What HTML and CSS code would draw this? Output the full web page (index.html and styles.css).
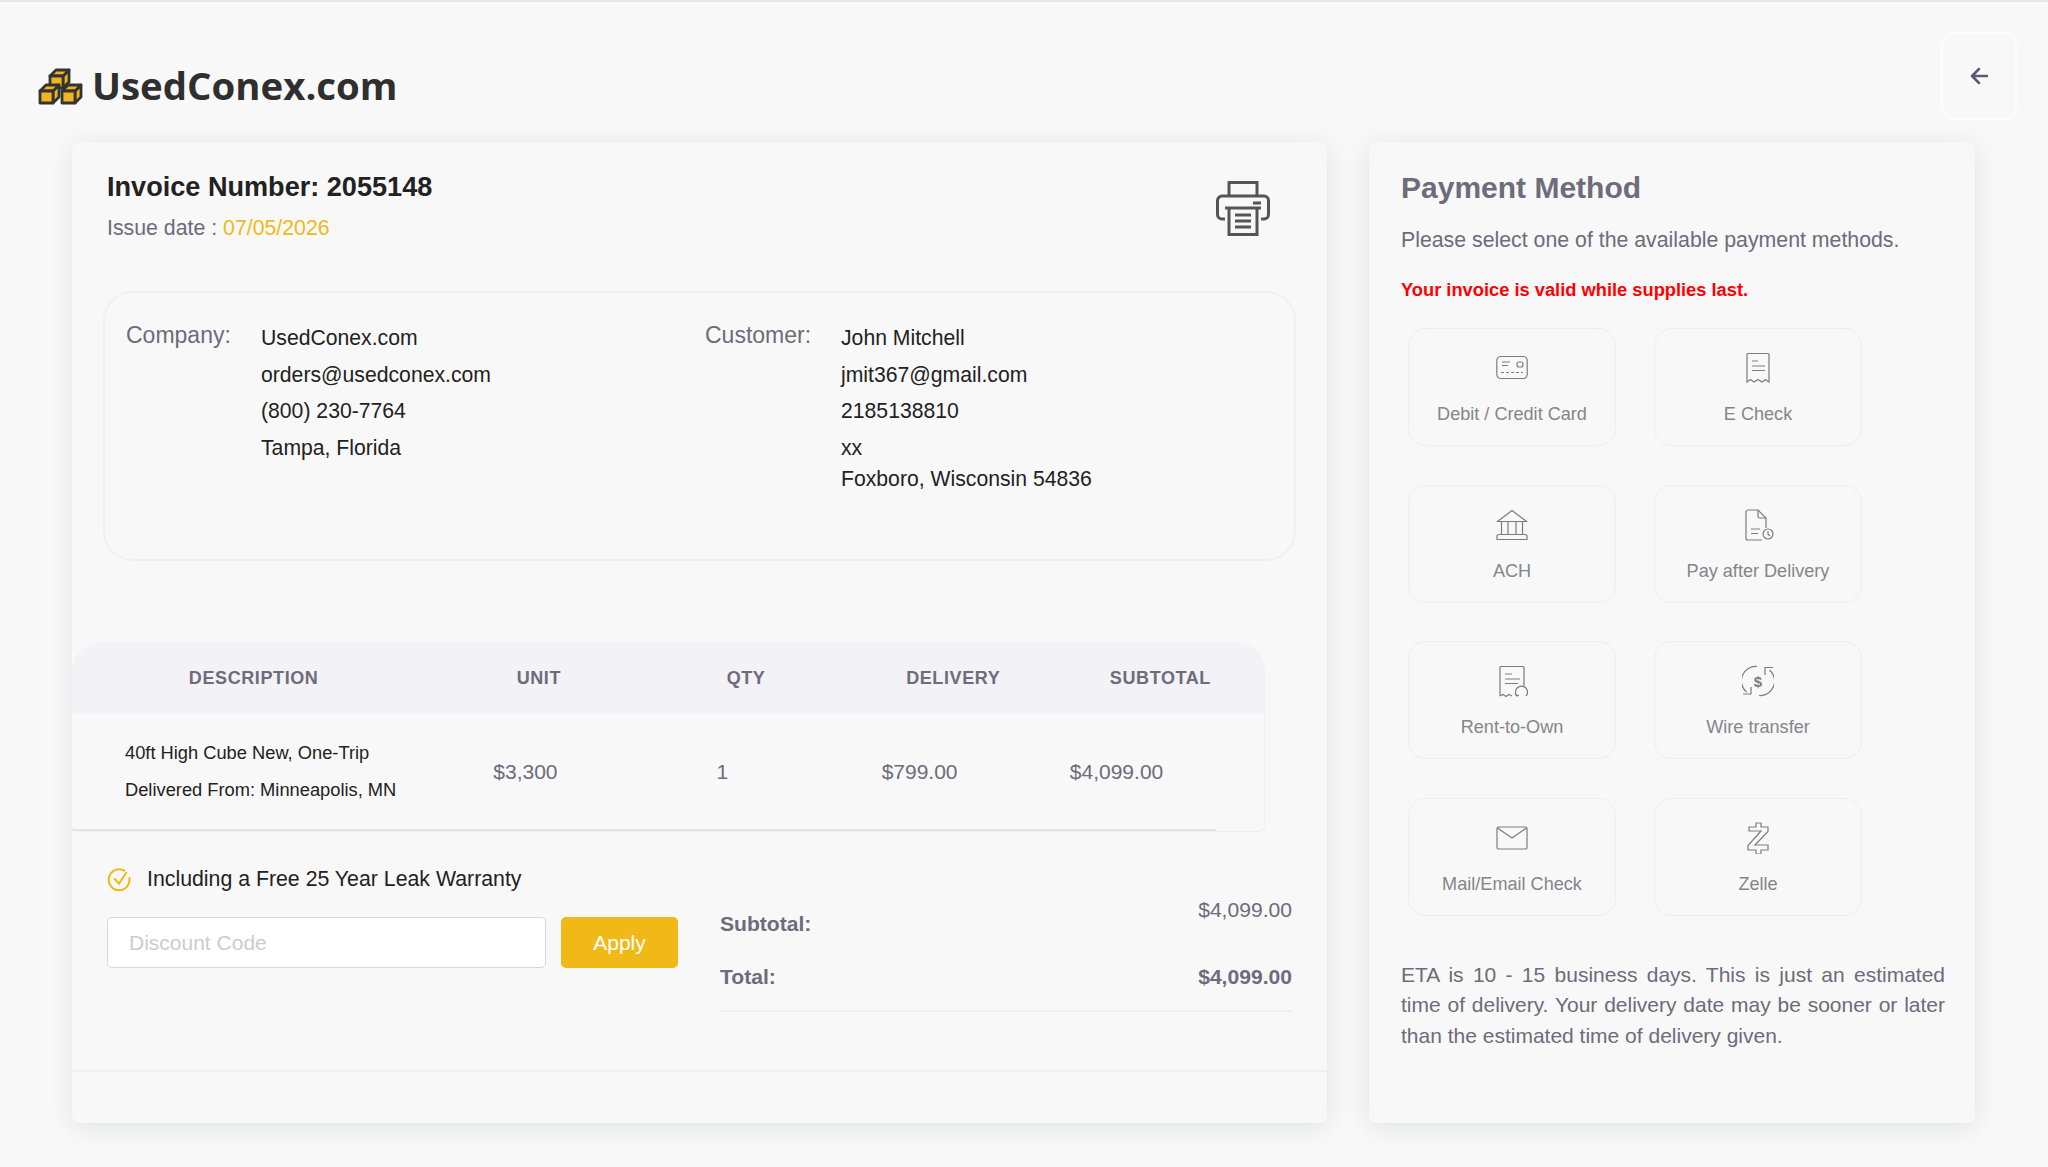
FILE: index.html
```html
<!DOCTYPE html>
<html lang="en">
<head>
	<meta charset="UTF-8">
	<meta name="viewport" content="width=device-width, initial-scale=1.0">
	<title>Invoice 2055148</title>
	<link rel="stylesheet" href="styles.css">
</head>
<body>
	<header class="topbar">
		<div class="logo">
			<svg class="logo__icon" viewBox="0 0 46 38">
				<defs>
					<g id="cube">
						<path class="cube__side" d="M13 0l6-6v12l-6 6z"/>
						<path class="cube__top" d="M0 0l6-6h13l-6 6z"/>
						<rect class="cube__front" width="13" height="12"/>
					</g>
				</defs>
				<use href="#cube" x="12" y="9"/>
				<use href="#cube" x="2" y="24"/>
				<use href="#cube" x="24" y="24"/>
			</svg>
			<span class="logo__text">UsedConex.com</span>
		</div>
		<button class="btn-back">
			<svg viewBox="0 0 24 24" class="btn-back__icon"><path d="M20 12H5M12 19l-7-7 7-7"/></svg>
		</button>
	</header>

	<main class="container">
		<section class="card invoice">
			<div class="invoice__head">
				<div>
					<h1 class="invoice__number">Invoice Number: 2055148</h1>
					<p class="invoice__date">Issue date : <span class="accent">07/05/2026</span></p>
				</div>
				<svg class="invoice__print" viewBox="0 0 54 55">
					<path d="M13 15V1.500h28V15"/>
					<path d="M9 38H6a4.500 4.500 0 0 1-4.500-4.500V19.500A4.500 4.500 0 0 1 6 15h42a4.500 4.500 0 0 1 4.500 4.500v14A4.500 4.500 0 0 1 48 38h-3"/>
					<path d="M37 22h8M9 27h36M13 27v26.500h28V27M19 34h16M19 40h16M19 46h16"/>
				</svg>
			</div>

			<div class="parties">
				<div class="party party--company">
					<span class="party__label">Company:</span>
					<div class="party__info">
						<p>UsedConex.com</p>
						<p>orders@usedconex.com</p>
						<p>(800) 230-7764</p>
						<p>Tampa, Florida</p>
					</div>
				</div>
				<div class="party party--customer">
					<span class="party__label">Customer:</span>
					<div class="party__info">
						<p>John Mitchell</p>
						<p>jmit367@gmail.com</p>
						<p>2185138810</p>
						<p>xx</p>
						<p class="party__tight">Foxboro, Wisconsin 54836</p>
					</div>
				</div>
			</div>

			<div class="items">
				<table class="items__table">
					<thead>
						<tr>
							<th class="col-desc">Description</th>
							<th>Unit</th>
							<th>Qty</th>
							<th>Delivery</th>
							<th>Subtotal</th>
						</tr>
					</thead>
					<tbody>
						<tr>
							<td class="items__desc">
								<p>40ft High Cube New, One-Trip</p>
								<p>Delivered From: Minneapolis, MN</p>
							</td>
							<td class="cell-unit">$3,300</td>
							<td class="cell-qty">1</td>
							<td class="cell-delivery">$799.00</td>
							<td class="cell-subtotal">$4,099.00</td>
						</tr>
					</tbody>
				</table>
				<div class="items__line"></div>
			</div>

			<div class="summary">
				<div class="summary__left">
					<div class="warranty">
						<svg class="warranty__icon" viewBox="0 0 24 24">
							<path d="M21.500 10.500a10 10 0 1 1-5-7"/>
							<path d="M7.500 11.500l4 4.500 7-10.500"/>
						</svg>
						<span>Including a Free 25 Year Leak Warranty</span>
					</div>
					<div class="discount">
						<input class="discount__input" type="text" placeholder="Discount Code">
						<button class="discount__btn">Apply</button>
					</div>
				</div>
				<div class="totals">
					<div class="totals__row totals__row--sub">
						<b>Subtotal:</b>
						<span>$4,099.00</span>
					</div>
					<div class="totals__row">
						<b>Total:</b>
						<b>$4,099.00</b>
					</div>
				</div>
			</div>
			<div class="invoice__footer"></div>
		</section>

		<aside class="card payment">
			<h2 class="payment__title">Payment Method</h2>
			<p class="payment__text">Please select one of the available payment methods.</p>
			<p class="payment__warn">Your invoice is valid while supplies last.</p>

			<div class="methods">
				<div class="method">
					<svg class="method__icon" viewBox="0 0 32 32">
						<rect x="0.800" y="4.500" width="30.400" height="22" rx="4"/>
						<path d="M6 10h8M6 13.500h6M5 20.500h3M10 20.500h3M15 20.500h3M20 20.500h3M25 20.500h2"/>
						<rect x="21" y="10" width="6" height="5" rx="2"/>
					</svg>
					<span>Debit / Credit Card</span>
				</div>
				<div class="method">
					<svg class="method__icon" viewBox="0 0 32 32">
						<path d="M5 30V2.500a1 1 0 0 1 1-1h20a1 1 0 0 1 1 1V30l-3.500-2.500L20 30l-4-2.500-4 2.500-3.500-2.500z"/>
						<path d="M10 9h6M10 14h13M10 18.500h13"/>
					</svg>
					<span>E Check</span>
				</div>
				<div class="method">
					<svg class="method__icon" viewBox="0 0 32 32">
						<path d="M1.500 12.500L16 1.500l14.500 11z"/>
						<path d="M5.500 12.500v13M12 12.500v13M20 12.500v13M26.500 12.500v13M3.500 25.500h25M1 30.500v-2.500a2 2 0 0 1 2-2.500h26a2 2 0 0 1 2 2.500v2.500z"/>
					</svg>
					<span>ACH</span>
				</div>
				<div class="method">
					<svg class="method__icon" viewBox="0 0 32 32">
						<path d="M24 19V9l-8-8H6a2 2 0 0 0-2 2v26a2 2 0 0 0 2 2h14"/>
						<path d="M16 1v6.500a1.500 1.500 0 0 0 1.500 1.500H24M9 20h9M9 24.500h7"/>
						<circle cx="26" cy="25" r="5"/>
						<path d="M26 22v3.200l2 1.800"/>
					</svg>
					<span>Pay after Delivery</span>
				</div>
				<div class="method">
					<svg class="method__icon" viewBox="0 0 32 32">
						<path d="M4 31V2.500a1 1 0 0 1 1-1h22a1 1 0 0 1 1 1V21M4 31l3-1.500 3 2 3-2 3 1.500"/>
						<path d="M9 9h7M9 14h15M9 18.500h13"/>
						<path d="M21 31a6 6 0 1 1 9 0M19 29l2 2 2-1"/>
					</svg>
					<span>Rent-to-Own</span>
				</div>
				<div class="method">
					<svg class="method__icon" viewBox="0 0 32 32">
						<path d="M15 1.500A14.500 14.500 0 0 0 4.500 27M17 30.500A14.500 14.500 0 0 0 27.500 5"/>
						<path d="M1 29h8v-7M31 2.500h-8V10"/>
						<text class="method__dollar" x="16" y="21.500" text-anchor="middle">$</text>
					</svg>
					<span>Wire transfer</span>
				</div>
				<div class="method">
					<svg class="method__icon" viewBox="0 0 32 32">
						<path d="M2.500 5h27a1.500 1.500 0 0 1 1.500 1.500v19a1.500 1.500 0 0 1-1.500 1.500h-27A1.500 1.500 0 0 1 1 25.500v-19A1.500 1.500 0 0 1 2.500 5z"/>
						<path d="M1.500 6L16 16 30.500 6"/>
					</svg>
					<span>Mail/Email Check</span>
				</div>
				<div class="method">
					<svg class="method__icon" viewBox="0 0 32 32">
						<path d="M14 1h5v4h7v4.500L13 23h13v5h-7v4h-5v-4H6v-4.500L19 9H7V5h7z"/>
					</svg>
					<span>Zelle</span>
				</div>
			</div>

			<p class="payment__eta">ETA is 10 - 15 business days. This is just an estimated time of delivery. Your delivery date may be sooner or later than the estimated time of delivery given.</p>
		</aside>
	</main>
</body>
</html>
```

FILE: styles.css
```css
*{
	margin: 0;
	padding: 0;
	box-sizing: border-box;
}
body{
	min-height: 100vh;
	background-color: #f8f8f8;
	border-top: 2px solid #e6e6e6;
	font-family: "Liberation Sans", Arial, sans-serif;
	color: #6e6b7b;
}
.accent{
	color: #f0b917;
}

/* top */
.topbar{
	display: flex;
	justify-content: space-between;
	align-items: flex-start;
	padding: 30px 30px 22px 38px;
}
.logo{
	display: flex;
	align-items: center;
	gap: 8px;
	margin-top: 31px;
}
.logo__icon{
	width: 46px;
	height: 38px;
	margin-top: 2px;
}
.cube__front, .cube__top, .cube__side{
	fill: #f0b41e;
	stroke: #333;
	stroke-width: 2.800;
	stroke-linejoin: round;
}
.logo__text{
	font-family: "Open Sans", sans-serif;
	font-weight: 700;
	font-size: 38.400px;
	line-height: 44px;
	color: #2f2f2f;
}
.btn-back{
	display: flex;
	align-items: center;
	justify-content: center;
	width: 76px;
	height: 88px;
	margin-right: 1px;
	background: #f8f8f8;
	border: 2px solid #fdfdfd;
	border-radius: 14px;
}
.btn-back__icon{
	width: 24px;
	height: 24px;
	fill: none;
	stroke: #5e5873;
	stroke-width: 2.500;
	stroke-linecap: round;
	stroke-linejoin: round;
}

/* layout */
.container{
	display: flex;
	gap: 42px;
	padding: 0 73px 0 72px;
}
.card{
	height: 981px;
	background-color: #f8f8f8;
	border-radius: 8px;
	box-shadow: 0 4px 24px rgba(34, 41, 47, .1);
}
.invoice{
	width: 1255px;
}
.payment{
	width: 606px;
	padding: 27px 30px 0 32px;
}

/* invoice head */
.invoice__head{
	display: flex;
	justify-content: space-between;
	align-items: flex-start;
	padding: 29px 57px 0 35px;
	height: 149px;
}
.invoice__number{
	font-size: 27.100px;
	line-height: 32px;
	color: #222;
}
.invoice__date{
	margin-top: 11px;
	font-size: 21.300px;
	line-height: 28px;
}
.invoice__print{
	width: 54px;
	height: 55px;
	margin-top: 10px;
	fill: none;
	stroke: #555;
	stroke-width: 3;
}

/* company & customer */
.parties{
	display: flex;
	width: 1193px;
	height: 270px;
	margin-left: 31px;
	padding: 27px 21px;
	border: 2px solid #f0f0f0;
	border-radius: 30px;
}
.party{
	display: flex;
	font-size: 21.200px;
	color: #222;
}
.party--company{
	width: 579px;
}
.party__label{
	width: 135px;
	font-size: 23px;
	line-height: 30px;
	color: #6e6b7b;
}
.party--customer .party__label{
	width: 136px;
}
.party__info p{
	line-height: 36.600px;
}
.party__info .party__tight{
	line-height: 26px;
}

/* table */
.items{
	width: 1193px;
	height: 190px;
	margin-top: 81px;
	border-right: 1px solid #efefef;
	border-bottom: 1px solid #efefef;
	border-radius: 30px 30px 6px 6px;
}
.items__table{
	width: 1192px;
	border-collapse: collapse;
	table-layout: fixed;
}
.items__table th{
	width: 207px;
	height: 71px;
	padding-top: 2px;
	background-color: #f3f2f7;
	font-size: 18px;
	letter-spacing: .6px;
	text-transform: uppercase;
}
.items__table th:first-child{
	border-top-left-radius: 30px;
}
.items__table th:last-child{
	border-top-right-radius: 30px;
}
.items__table .col-desc{
	width: 363px;
}
.items__table td{
	height: 116px;
	padding-top: 1px;
	font-size: 21px;
}
.items__table .items__desc{
	padding-left: 53px;
	font-size: 18.300px;
	color: #222;
}
.items__desc p{
	line-height: 36.600px;
}
.cell-unit{
	padding-left: 58px;
}
.cell-qty{
	padding-left: 74px;
}
.cell-delivery{
	padding-left: 32px;
}
.cell-subtotal{
	padding-left: 13px;
}
.items__line{
	width: 1144px;
	height: 2px;
	background-color: #e4e4e4;
}

/* summary */
.summary{
	display: flex;
	height: 238px;
	padding: 32px 35px 0 35px;
	justify-content: space-between;
}
.summary__left{
	width: 573px;
}
.warranty{
	display: flex;
	align-items: center;
	gap: 15px;
	font-size: 21.300px;
	line-height: 30px;
	color: #222;
}
.warranty__icon{
	width: 25px;
	height: 25px;
	fill: none;
	stroke: #f0b917;
	stroke-width: 2;
	stroke-linecap: round;
}
.discount{
	display: flex;
	gap: 15px;
	margin-top: 23px;
}
.discount__input{
	width: 439px;
	height: 51px;
	padding: 0 21px;
	background-color: #fff;
	border: 1px solid #d8d6de;
	border-radius: 5px;
	outline: none;
	font-family: inherit;
	font-size: 21px;
}
.discount__input::placeholder{
	color: #ccc;
}
.discount__btn{
	width: 117px;
	height: 51px;
	background-color: #f0b917;
	border: none;
	border-radius: 5px;
	font-family: inherit;
	font-size: 21px;
	color: #fff;
}
.totals{
	width: 572px;
	height: 148px;
	border-bottom: 2px solid #efefef;
	font-size: 21.100px;
}
.totals__row{
	display: flex;
	justify-content: space-between;
}
.totals__row--sub{
	height: 101px;
}
.totals__row--sub b{
	margin-top: 48px;
}
.totals__row--sub span{
	margin-top: 34px;
}
.invoice__footer{
	height: 2px;
	background-color: #f0eff5;
}

/* payment */
.payment__title{
	font-size: 30px;
	line-height: 38px;
}
.payment__text{
	margin-top: 19px;
	font-size: 21.300px;
	line-height: 28px;
}
.payment__warn{
	margin-top: 23px;
	font-size: 18.300px;
	font-weight: bold;
	line-height: 26px;
	color: #f00;
}
.methods{
	display: grid;
	grid-template-columns: repeat(2, 208px);
	grid-auto-rows: 118px;
	gap: 38.500px 38px;
	margin: 25px 0 0 7px;
}
.method{
	display: flex;
	flex-direction: column;
	align-items: center;
	padding-top: 23px;
	gap: 18px;
	border: 1px solid #eeeeee;
	border-radius: 18px;
	font-size: 18.100px;
	line-height: 24px;
	color: #82868b;
}
.method__icon{
	width: 32px;
	height: 32px;
	fill: none;
	stroke: #7c7c7c;
	stroke-width: 1.200;
	flex-shrink: 0;
}
.method__dollar{
	font-family: "Liberation Sans", sans-serif;
	font-size: 15px;
	font-weight: bold;
	fill: #7c7c7c;
	stroke: none;
}
.payment__eta{
	margin-top: 44px;
	font-size: 21px;
	line-height: 30.500px;
	text-align: justify;
}
```
